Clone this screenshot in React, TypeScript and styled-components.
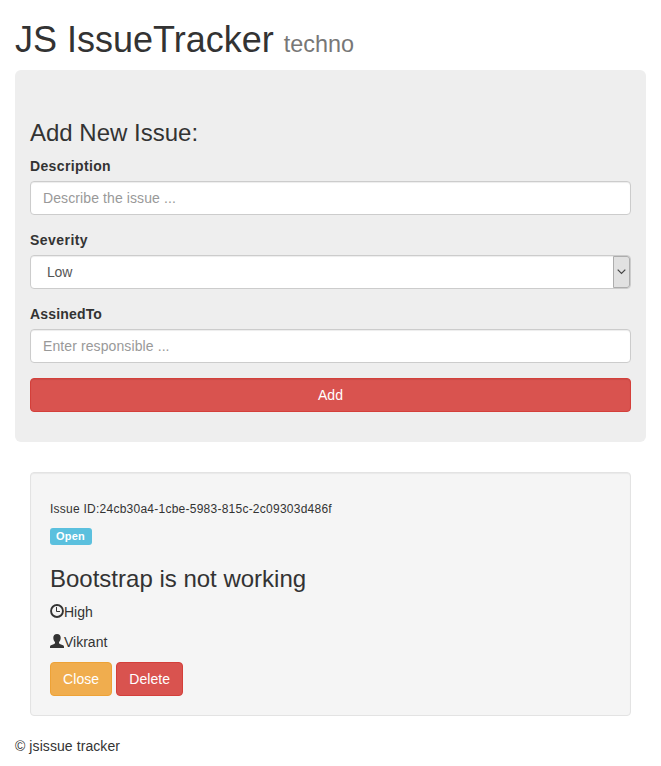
import React from "react";
import styled, { createGlobalStyle, css } from "styled-components";

const GlobalStyle = createGlobalStyle`
  *, *::before, *::after { box-sizing: border-box; }
  body {
    margin: 0;
    background: #fff;
    color: #333;
    font: 14px/20px "Liberation Sans", Arial, sans-serif;
  }
`;

const Container = styled.main`
  padding: 0 15px;
  height: 766px;
  overflow: hidden;
`;

const Title = styled.h1`
  margin: 20px 0 10px;
  font-size: 36px;
  line-height: 40px;
  font-weight: 400;
`;

const Subtitle = styled.small`
  font-size: 23.4px;
  line-height: 1;
  color: #777;
`;

const Jumbotron = styled.section`
  height: 372px;
  padding: 50px 15px 30px;
  margin-bottom: 30px;
  border-radius: 6px;
  background: #eee;
`;

const Heading = styled.h3<{ $top?: number }>`
  margin: ${(p) => p.$top ?? 0}px 0 10px;
  font-size: 24px;
  line-height: 26px;
  font-weight: 400;
`;

const Field = styled.div`
  margin-bottom: 15px;
`;

const Label = styled.label<{ $tracking?: number }>`
  display: block;
  margin-bottom: 5px;
  font-weight: 700;
  letter-spacing: ${(p) => p.$tracking ?? 0}px;
`;

const control = css`
  width: 100%;
  height: 34px;
  border: 1px solid #ccc;
  border-radius: 4px;
  background: #fff;
  color: #555;
  font: inherit;
  box-shadow: inset 0 1px 1px rgba(0, 0, 0, 0.075);
`;

const Input = styled.input`
  ${control}
  display: block;
  padding: 6px 12px;
  letter-spacing: 0.1px;
  &::placeholder { color: #999; opacity: 1; }
`;

const Select = styled.div`
  ${control}
  display: flex;
  align-items: center;
  justify-content: space-between;
  padding-left: 16px;
  letter-spacing: -0.2px;
`;

const SelectArrow = styled.span`
  display: flex;
  align-items: center;
  justify-content: center;
  width: 17px;
  height: 32px;
  border: 1px solid #adadad;
  border-radius: 0 3px 3px 0;
  background: #e1e1e1;
  & svg { margin-right: 1px; }
`;

const tones = {
  danger: { bg: "#d9534f", border: "#d43f3a" },
  warning: { bg: "#f0ad4e", border: "#eea236" },
};

const Button = styled.button<{ $tone: keyof typeof tones; $block?: boolean }>`
  height: 34px;
  padding: 6px 12px;
  width: ${(p) => (p.$block ? "100%" : "auto")};
  border: 1px solid ${(p) => tones[p.$tone].border};
  border-radius: 4px;
  background: ${(p) => tones[p.$tone].bg};
  color: #fff;
  font: inherit;
  letter-spacing: ${(p) => (p.$block ? 0 : 0.08)}px;
  box-shadow: ${(p) => (p.$block ? "inset 0 1px 1px rgba(0, 0, 0, 0.075)" : "none")};
`;

const Well = styled.article`
  margin: 0 15px 20px;
  height: 244px;
  padding: 19px;
  border: 1px solid #e3e3e3;
  border-radius: 4px;
  background: #f5f5f5;
  box-shadow: inset 0 1px 1px rgba(0, 0, 0, 0.05);
`;

const IssueId = styled.h6`
  margin: 11px 0 12px;
  font-size: 12px;
  line-height: 13px;
  font-weight: 400;
  letter-spacing: 0.245px;
`;

const Status = styled.span`
  display: block;
  width: 42px;
  height: 17px;
  padding-left: 6px;
  border-radius: 3px;
  background: #5bc0de;
  color: #fff;
  font-size: 11px;
  line-height: 17px;
  font-weight: 700;
  letter-spacing: 0.2px;
`;

const Meta = styled.p`
  display: flex;
  margin: 0 0 10px;
  & svg { margin-top: 2px; }
`;

const Actions = styled.div`
  display: flex;
  gap: 4px;
`;

const Footer = styled.footer`
  letter-spacing: 0.08px;
`;

const ClockIcon = () => (
  <svg width="14" height="14" viewBox="0 0 14 14" fill="none" stroke="#333">
    <circle cx="7" cy="7" r="5.950" strokeWidth="1.900" />
    <path d="M6.500 3v4.500h3.500" strokeWidth="1" />
  </svg>
);

const UserIcon = () => (
  <svg width="14" height="14" viewBox="0 0 14 14" fill="#333">
    <path d="M7 0C4.600 0 3.300 1.500 3.300 3.700c0 1.900.7 3.400 1.700 4.300v.9c0 .5-.3.8-.8 1L1 11.300c-.6.3-1 .8-1 1.500V14h14v-1.200c0-.7-.4-1.200-1-1.500L9.800 9.900c-.5-.2-.8-.5-.8-1V8c1-.9 1.700-2.400 1.700-4.300C10.700 1.500 9.400 0 7 0z" />
  </svg>
);

const ChevronIcon = () => (
  <svg width="9" height="6" viewBox="0 0 9 6" fill="none" stroke="#444">
    <path d="M.7.7l3.800 3.800L8.300.7" strokeWidth="1.200" />
  </svg>
);

export default function App() {
  return (
    <>
      <GlobalStyle />
      <Container>
        <Title>
          JS IssueTracker <Subtitle>techno</Subtitle>
        </Title>
        <Jumbotron>
          <Heading>Add New Issue:</Heading>
          <Field>
            <Label htmlFor="description" $tracking={0.36}>Description</Label>
            <Input id="description" placeholder="Describe the issue ..." />
          </Field>
          <Field>
            <Label $tracking={0.45}>Severity</Label>
            <Select role="combobox" aria-label="Severity">
              Low
              <SelectArrow>
                <ChevronIcon />
              </SelectArrow>
            </Select>
          </Field>
          <Field>
            <Label htmlFor="assignee" $tracking={0.17}>AssinedTo</Label>
            <Input id="assignee" placeholder="Enter responsible ..." />
          </Field>
          <Button $tone="danger" $block>Add</Button>
        </Jumbotron>
        <Well>
          <IssueId>Issue ID:24cb30a4-1cbe-5983-815c-2c09303d486f</IssueId>
          <Status>Open</Status>
          <Heading $top={21}>Bootstrap is not working</Heading>
          <Meta><ClockIcon />High</Meta>
          <Meta><UserIcon />Vikrant</Meta>
          <Actions>
            <Button $tone="warning">Close</Button>
            <Button $tone="danger">Delete</Button>
          </Actions>
        </Well>
        <Footer>© jsissue tracker</Footer>
      </Container>
    </>
  );
}
